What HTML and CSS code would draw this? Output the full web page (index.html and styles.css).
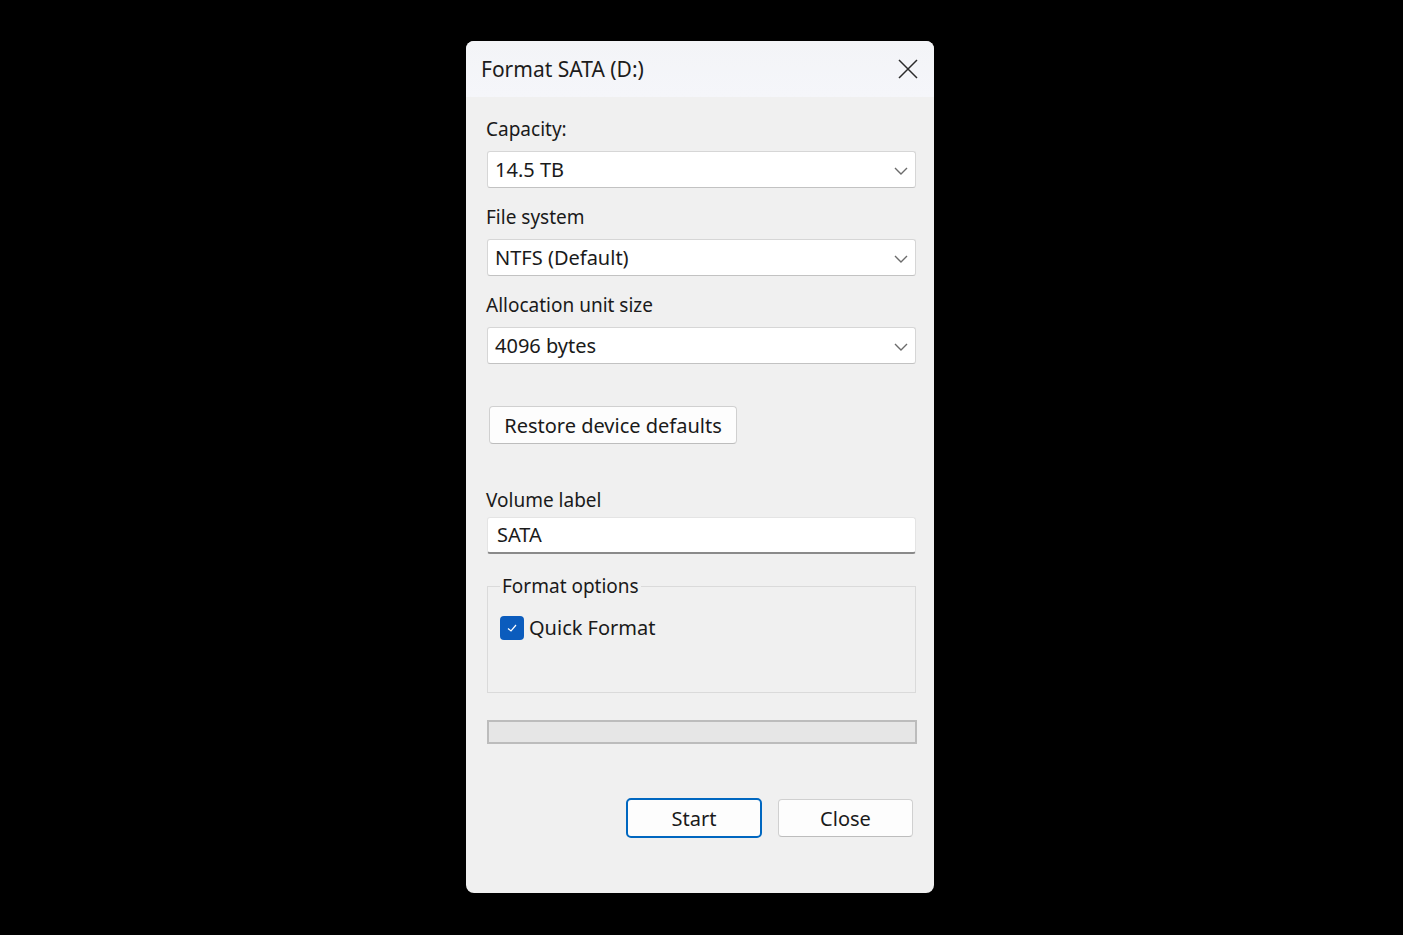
FILE: index.html
```html
<!DOCTYPE html>
<html lang="en">
<head>
    <meta charset="UTF-8">
    <title>Format SATA (D:)</title>
    <link rel="stylesheet" href="styles.css">
</head>
<body>
    <div class="window">
        <div class="titlebar">
            <span class="title">Format SATA (D:)</span>
            <button class="close-x" aria-label="Close">
                <svg width="22" height="22" viewBox="0 0 22 22">
                    <path d="M2 2 L20 20 M20 2 L2 20" stroke="#2b2b2b" stroke-width="1.5" fill="none"/>
                </svg>
            </button>
        </div>

        <div class="content">
            <div class="field-label">Capacity:</div>
            <div class="select">
                <span>14.5 TB</span>
                <svg class="chevron" width="16" height="10" viewBox="0 0 16 10"><path d="M2 2 L8 8 L14 2" stroke="#6b6b6b" stroke-width="1.4" fill="none"/></svg>
            </div>

            <div class="field-label spaced">File system</div>
            <div class="select">
                <span>NTFS (Default)</span>
                <svg class="chevron" width="16" height="10" viewBox="0 0 16 10"><path d="M2 2 L8 8 L14 2" stroke="#6b6b6b" stroke-width="1.4" fill="none"/></svg>
            </div>

            <div class="field-label spaced">Allocation unit size</div>
            <div class="select">
                <span>4096 bytes</span>
                <svg class="chevron" width="16" height="10" viewBox="0 0 16 10"><path d="M2 2 L8 8 L14 2" stroke="#6b6b6b" stroke-width="1.4" fill="none"/></svg>
            </div>

            <button class="btn btn-restore">Restore device defaults</button>

            <div class="field-label volume-label">Volume label</div>
            <div class="text-input">SATA</div>

            <fieldset class="group">
                <legend>Format options</legend>
                <label class="check">
                    <span class="check-box">
                        <svg width="14" height="14" viewBox="0 0 14 14"><path d="M3 7.5 L6 10 L11 4" stroke="#ffffff" stroke-width="1.2" fill="none"/></svg>
                    </span>
                    Quick Format
                </label>
            </fieldset>

            <div class="progress"></div>

            <div class="actions">
                <button class="btn btn-default">Start</button>
                <button class="btn btn-close">Close</button>
            </div>
        </div>
    </div>
</body>
</html>
```

FILE: styles.css
```css
* {
    margin: 0;
    padding: 0;
    box-sizing: border-box;
}

body {
    font-family: 'Noto Sans', 'Open Sans', Arial, sans-serif;
    background: #000;
    min-height: 100vh;
    padding: 41px 0 0 466px;
    color: #1a1a1a;
}

.window {
    width: 468px;
    height: 852px;
    background: #f0f0f0;
    border-radius: 8px;
    overflow: hidden;
}

.titlebar {
    height: 56px;
    background: linear-gradient(#f3f4f7, #f5f6fa);
    display: flex;
    align-items: center;
    justify-content: space-between;
    padding: 0 14px 0 15px;
}

.title {
    font-size: 21px;
    color: #1c1c1c;
}

.close-x {
    border: none;
    background: none;
    width: 24px;
    height: 24px;
    display: flex;
    align-items: center;
    justify-content: center;
}

.content {
    padding: 19px 18px 0 21px;
    font-size: 20px;
}

.field-label {
    height: 26px;
    line-height: 26px;
    margin-bottom: 9px;
    margin-left: -1px;
    font-size: 19px;
}

.field-label.spaced {
    margin-top: 16px;
}

.select {
    height: 37px;
    background: #fff;
    border: 1px solid #d6d6d6;
    border-bottom-color: #c2c2c2;
    border-radius: 3px;
    display: flex;
    align-items: center;
    justify-content: space-between;
    padding: 0 6px 0 7px;
}

.chevron {
    margin-top: 2px;
}

.btn {
    font-family: inherit;
    font-size: 20px;
    color: #1a1a1a;
    background: #fdfdfd;
    border: 1px solid #d0d0d0;
    border-bottom-color: #bdbdbd;
    border-radius: 4px;
}

.btn-restore {
    display: block;
    margin: 42px 0 0 2px;
    width: 248px;
    height: 38px;
}

.volume-label {
    margin-top: 43px;
    margin-bottom: 4px;
}

.text-input {
    height: 37px;
    background: #fff;
    border: 1px solid #e4e4e4;
    border-bottom: 2px solid #8a8a8a;
    border-radius: 3px;
    padding: 0 9px;
    line-height: 34px;
}

.group {
    margin-top: 21px;
    height: 118px;
    border: 1px solid #dadada;
    padding: 17px 12px 0 12px;
}

.group legend {
    margin-left: 0;
    padding: 0 2px;
    line-height: 22px;
    font-size: 19px;
}

.check {
    display: flex;
    align-items: center;
    gap: 5px;
}

.check-box {
    width: 24px;
    height: 24px;
    border-radius: 4px;
    background: #0b5cbd;
    display: flex;
    align-items: center;
    justify-content: center;
}

.progress {
    margin-top: 27px;
    height: 24px;
    background: #e6e6e6;
    border: 2px solid #bcbcbc;
    margin-right: -1px;
}

.actions {
    margin-top: 54px;
    display: flex;
    justify-content: flex-end;
    align-items: center;
    gap: 16px;
    padding-right: 3px;
}

.btn-default {
    width: 136px;
    height: 40px;
    border: 2px solid #0067c0;
    border-radius: 5px;
}

.btn-close {
    width: 135px;
    height: 38px;
}
```
